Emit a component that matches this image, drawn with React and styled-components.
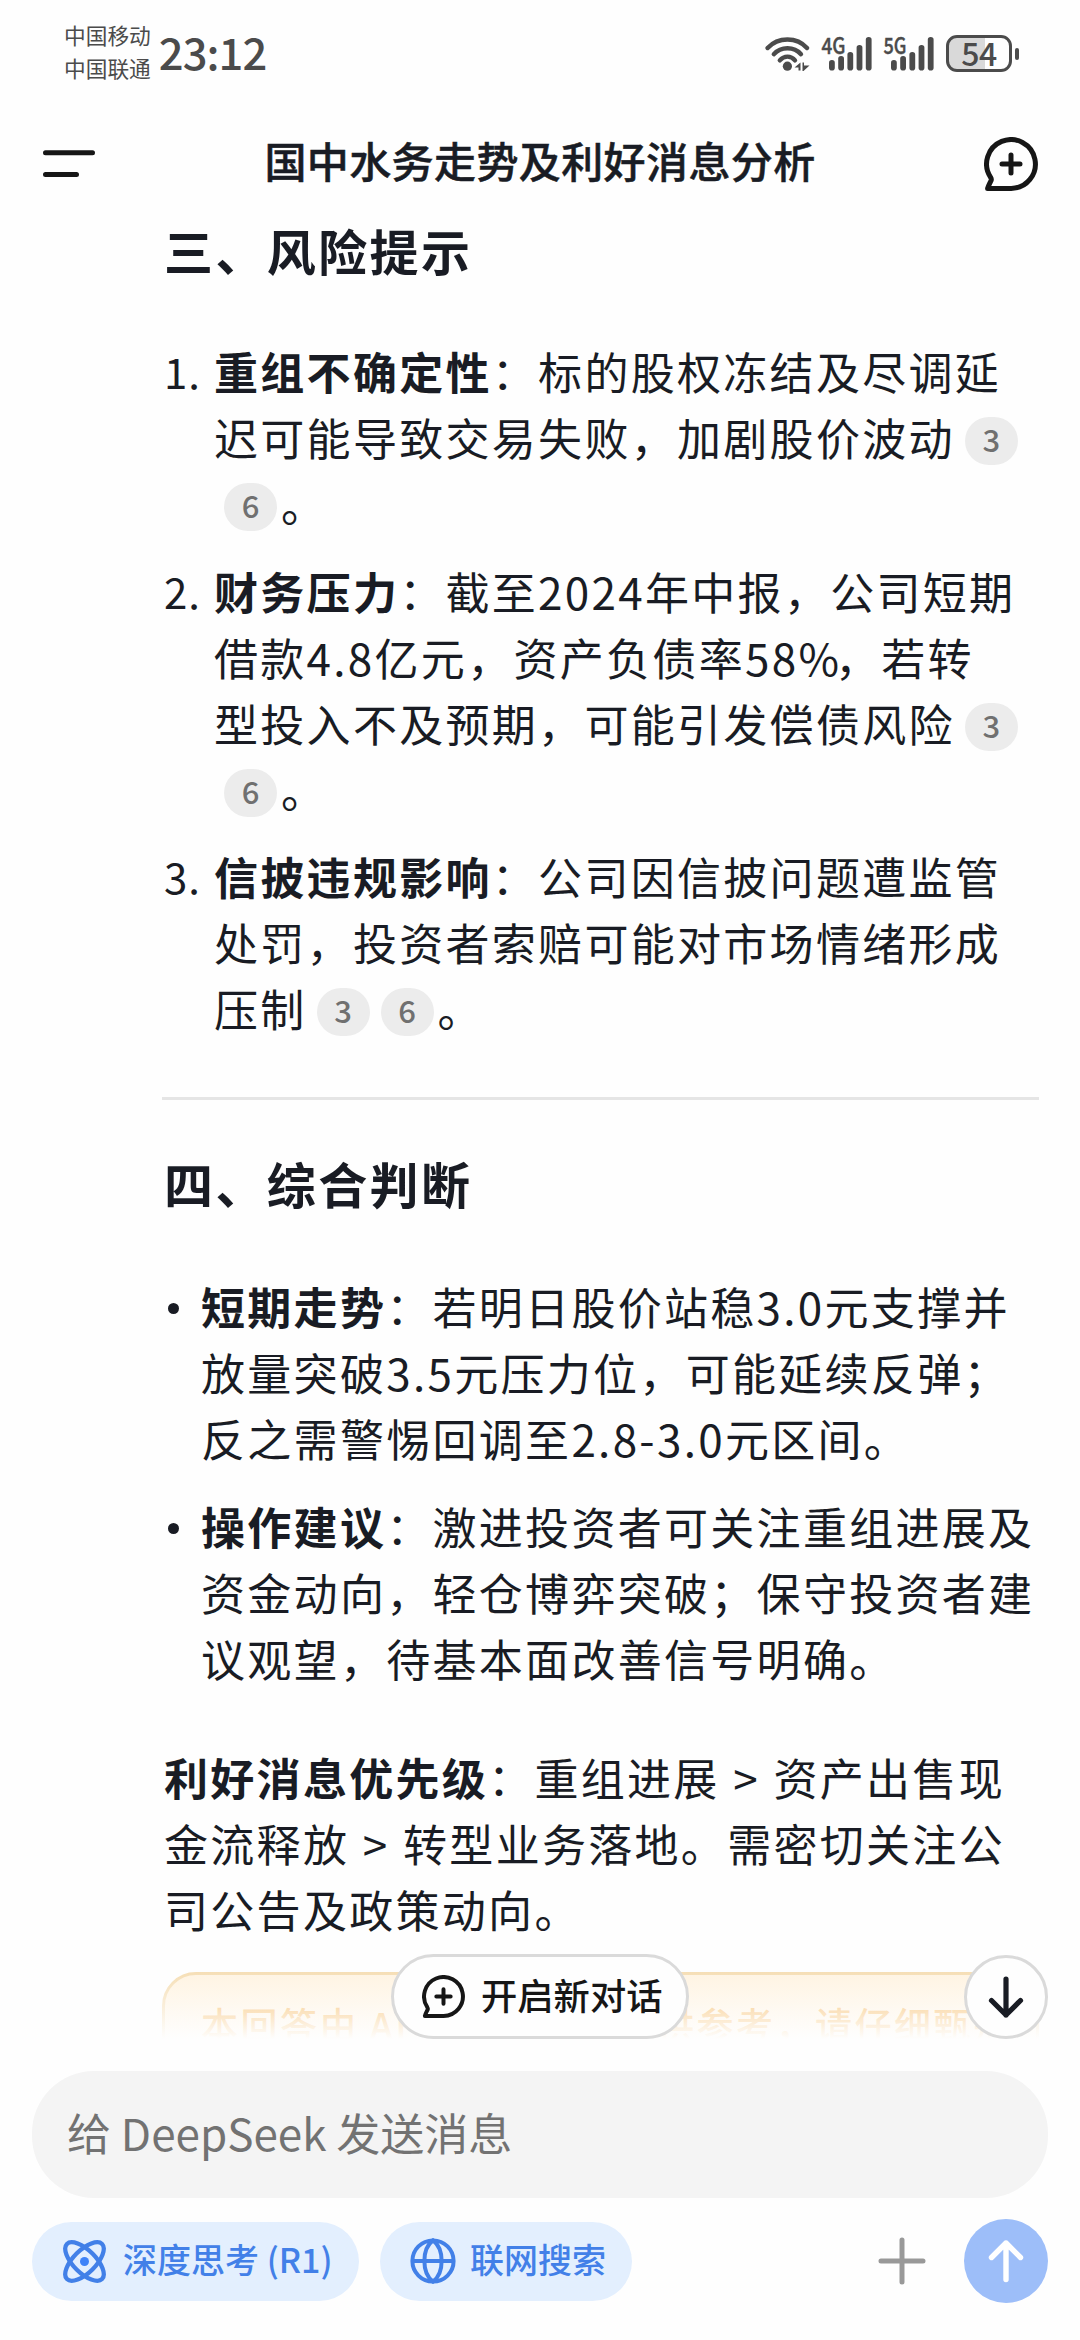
import React from 'react'
import styled, { createGlobalStyle } from 'styled-components'

const GlobalStyle = createGlobalStyle`
  * {
    box-sizing: border-box;
  }

  body {
    margin: 0;
    background-color: #fefefe;
    color: #191c24;
    font-family: 'Noto Sans CJK SC', sans-serif;
    text-spacing-trim: space-all;
    overflow: hidden;
  }
`

const Screen = styled.div`
  display: flex;
  flex-direction: column;
  width: 1080px;
  height: 2340px;
  background-color: #fefefe;
  white-space: nowrap;
`

const StatusBar = styled.div`
  display: flex;
  justify-content: space-between;
  height: 112px;
  padding: 0 61px 0 64px;
  color: #4b4b4b;
`

const StatusLeft = styled.div`
  display: flex;
  gap: 8px;
`

const Carriers = styled.div`
  padding-top: 18px;
  font-size: 21.7px;
  line-height: 33px;
`

const Clock = styled.div`
  padding-top: 19px;
  font-size: 43.5px;
  font-weight: 500;
  letter-spacing: -0.9px;
  line-height: 66px;
`

const StatusIcons = styled.div`
  display: flex;
  align-items: flex-start;
  padding-top: 35px;
`

const WifiIcon = styled.svg`
  margin-right: 11px;
`

const SignalIcon = styled.svg`
  margin-right: ${props => props.$gap}px;
  overflow: visible;
`

const Battery = styled.div`
  width: 66px;
  height: 37px;
  border: 3px solid #4b4b4b;
  border-radius: 11px;
  background: linear-gradient(to right, #d9d9d9 36px, #fefefe 36px);
  font-size: 32px;
  font-weight: 500;
  letter-spacing: -0.6px;
  line-height: 28px;
  text-align: center;
`

const BatteryTip = styled.div`
  width: 4px;
  height: 12px;
  margin: 13px 0 0 3px;
  border-radius: 2px;
  background-color: #4b4b4b;
`

const Header = styled.header`
  display: flex;
  align-items: center;
  justify-content: space-between;
  height: 100px;
  padding: 3px 42px 0;
`

const Title = styled.h1`
  margin: 0 0 8px;
  font-size: 42px;
  font-weight: 500;
  letter-spacing: 0.4px;
  line-height: 60px;
  -webkit-text-stroke: 0.5px #191c24;
`

const Thread = styled.main`
  position: relative;
  height: 1827px;
`

const Messages = styled.div`
  height: 1827px;
  padding: 6px 41px 0 162px;
  overflow: hidden;
`

const Heading = styled.h2`
  position: relative;
  margin: 0 0 ${props => props.$gap}px 2px;
  font-size: 49px;
  font-weight: 700;
  letter-spacing: 2.4px;
  line-height: 64px;
  padding-bottom: 2px;
`

const List = styled.div`
  display: flex;
  flex-direction: column;
  gap: 21.5px;
`

const Item = styled.div`
  display: flex;
`

const Marker = styled.div`
  flex: none;
  width: 50px;
  margin-left: 2px;
  font-size: 42px;
  line-height: 66px;
  letter-spacing: 1px;
`

const Bullet = styled.div`
  flex: none;
  width: 11px;
  height: 11px;
  margin: 30px 22px 0 6px;
  border-radius: 50%;
  background-color: #191c24;
`

const Line = styled.div`
  height: 66px;
  font-size: 44px;
  line-height: 66px;
  letter-spacing: 2.3px;
  word-spacing: 1.4px;
`

const Strong = styled.strong`
  font-weight: 700;
`

const Percent = styled.span`
  letter-spacing: -4px;
`

const Cite = styled.span`
  display: inline-block;
  width: 53px;
  height: 48px;
  margin: 0 4px 0 10px;
  border-radius: 24px;
  background-color: #ececec;
  color: #707070;
  font-size: 31px;
  font-weight: 500;
  letter-spacing: 0;
  line-height: 44px;
  text-align: center;
  vertical-align: 4px;

  & + & {
    margin-left: 7px;
  }
`

const Divider = styled.div`
  height: 3px;
  margin: 56px 0 51px;
  background-color: #e5e5e5;
`

const Paragraph = styled.div`
  margin: 53px 0 0 2px;
`

const Disclaimer = styled.div`
  height: 160px;
  margin-top: 30px;
  padding: 22px 36px;
  border: 3px solid #f5dcb0;
  border-radius: 34px;
  background-color: #fff3e0;
  color: #f6b556;
  font-size: 37px;
  font-weight: 500;
  letter-spacing: 2.5px;
  line-height: 54px;
`

const Fade = styled.div`
  position: absolute;
  right: 0;
  bottom: 0;
  left: 0;
  height: 72px;
  background: linear-gradient(to bottom, rgba(254, 254, 254, 0), #fefefe);
`

const NewChatButton = styled.button`
  position: absolute;
  bottom: 0;
  left: 391px;
  display: flex;
  align-items: center;
  gap: 16px;
  width: 298px;
  height: 85px;
  padding: 0 0 0 28px;
  border: 3px solid #dadada;
  border-radius: 43px;
  background-color: #fefefe;
  color: #161616;
  font-family: inherit;
  font-size: 36.3px;
  font-weight: 500;
  line-height: 50px;
`

const ButtonText = styled.span`
  margin-bottom: 5px;
`

const ScrollButton = styled.button`
  position: absolute;
  right: 32px;
  bottom: 0;
  display: flex;
  align-items: center;
  justify-content: center;
  width: 84px;
  height: 84px;
  padding: 0;
  border: 3px solid #dadada;
  border-radius: 50%;
  background-color: #fefefe;
`

const Composer = styled.footer`
  padding: 32px 32px 0;
`

const MessageBox = styled.div`
  height: 127px;
  padding: 28px 35px;
  border-radius: 62px;
  background-color: #f4f4f4;
  color: #727272;
  font-size: 44px;
  line-height: 66px;
`

const Tools = styled.div`
  display: flex;
  align-items: center;
  height: 84px;
  margin-top: 21px;
`

const Chip = styled.div`
  display: flex;
  align-items: center;
  width: ${props => props.$width}px;
  height: 79px;
  margin-right: 21px;
  padding-left: 30px;
  border-radius: 40px;
  background-color: #e3effe;
  color: #4280e8;
  font-size: 34px;
  font-weight: 500;
  line-height: 50px;
`

const ChipText = styled.span`
  margin: 0 0 4px ${props => props.$gap}px;
`

const AddIcon = styled.svg`
  margin-left: auto;
`

const SendButton = styled.button`
  display: flex;
  align-items: center;
  justify-content: center;
  width: 84px;
  height: 84px;
  margin-left: 38px;
  padding: 0;
  border: none;
  border-radius: 50%;
  background-color: #9dbef9;
`

function ChatPlus({ size, stroke = 5 }) {
  return (
    <svg width={size} height={size} viewBox="0 0 54 54" fill="none" stroke="#161616" strokeWidth={stroke} strokeLinejoin="round" strokeLinecap="round">
      <path d="M3.6 51.4 C4.4 48.6 6 46 7.2 43.2 C7.6 42.2 7.2 41.4 6.6 40.4 A24.4 24.4 0 1 1 27.2 51.4 Z" />
      <path d="M18 27 H36 M27 18 V36" />
    </svg>
  )
}

function Signal({ label, width, gap }) {
  const tops = [25, 21, 17, 10, 2]
  return (
    <SignalIcon $gap={gap} width="51" height="37" viewBox="0 0 51 37" fill="#4b4b4b">
      <text x="0.5" y="18.5" fontSize="22.5" fontWeight="500" stroke="#4b4b4b" strokeWidth="0.4" textLength={width} lengthAdjust="spacingAndGlyphs">{label}</text>
      {tops.map((top, index) => (
        <rect key={index} x={8 + index * 9.2} y={top} width="5.8" height={35.5 - top} rx="2.8" />
      ))}
    </SignalIcon>
  )
}

function App() {
  return (
    <>
      <GlobalStyle />
      <Screen>
        <StatusBar>
          <StatusLeft>
            <Carriers>
              <div>中国移动</div>
              <div>中国联通</div>
            </Carriers>
            <Clock>23:12</Clock>
          </StatusLeft>
          <StatusIcons>
            <WifiIcon width="45" height="37" viewBox="0 0 45 37" fill="none" stroke="#4b4b4b" strokeWidth="4.4" strokeLinecap="round">
              <path d="M2.6 13 C13 1.6 32 1.6 42 13" />
              <path d="M8.8 19.2 C16 11.3 29 11.3 36 19.2" />
              <path d="M14.8 25.4 C19 20.4 26 20.4 30 25.4" />
              <circle cx="22.4" cy="31.2" r="4.6" fill="#4b4b4b" stroke="none" />
              <path d="M29.5 32.5 L35.5 27.5 V35.5 H33.5 V32.5 Z M37.5 27.5 H39 V30.5 H44.5 L38.5 36 H37.5 Z" fill="#4b4b4b" stroke="none" />
            </WifiIcon>
            <Signal label="4G" width={24} gap={11} />
            <Signal label="5G" width={23} gap={12} />
            <Battery>54</Battery>
            <BatteryTip />
          </StatusIcons>
        </StatusBar>

        <Header>
          <svg width="54" height="28" viewBox="0 0 54 28" stroke="#161616" strokeWidth="5" strokeLinecap="round">
            <path d="M3.5 2.8 H50.5 M3.5 24.4 H34.5" />
          </svg>
          <Title>国中水务走势及利好消息分析</Title>
          <ChatPlus size={54} />
        </Header>

        <Thread>
          <Messages>
            <Heading $gap={54}>三、风险提示</Heading>
            <List>
              <Item>
                <Marker>1.</Marker>
                <div>
                  <Line><Strong>重组不确定性</Strong>：标的股权冻结及尽调延</Line>
                  <Line>迟可能导致交易失败，加剧股价波动<Cite>3</Cite></Line>
                  <Line><Cite>6</Cite>。</Line>
                </div>
              </Item>
              <Item>
                <Marker>2.</Marker>
                <div>
                  <Line><Strong>财务压力</Strong>：截至2024年中报，公司短期</Line>
                  <Line>借款4.8亿元，资产负债率58<Percent>%</Percent>，若转</Line>
                  <Line>型投入不及预期，可能引发偿债风险<Cite>3</Cite></Line>
                  <Line><Cite>6</Cite>。</Line>
                </div>
              </Item>
              <Item>
                <Marker>3.</Marker>
                <div>
                  <Line><Strong>信披违规影响</Strong>：公司因信披问题遭监管</Line>
                  <Line>处罚，投资者索赔可能对市场情绪形成</Line>
                  <Line>压制<Cite>3</Cite><Cite>6</Cite>。</Line>
                </div>
              </Item>
            </List>

            <Divider />

            <Heading $gap={56}>四、综合判断</Heading>
            <List>
              <Item>
                <Bullet />
                <div>
                  <Line><Strong>短期走势</Strong>：若明日股价站稳3.0元支撑并</Line>
                  <Line>放量突破3.5元压力位，可能延续反弹；</Line>
                  <Line>反之需警惕回调至2.8-3.0元区间。</Line>
                </div>
              </Item>
              <Item>
                <Bullet />
                <div>
                  <Line><Strong>操作建议</Strong>：激进投资者可关注重组进展及</Line>
                  <Line>资金动向，轻仓博弈突破；保守投资者建</Line>
                  <Line>议观望，待基本面改善信号明确。</Line>
                </div>
              </Item>
            </List>

            <Paragraph>
              <Line><Strong>利好消息优先级</Strong>：重组进展 &gt; 资产出售现</Line>
              <Line>金流释放 &gt; 转型业务落地。需密切关注公</Line>
              <Line>司公告及政策动向。</Line>
            </Paragraph>

            <Disclaimer>本回答由 AI 生成，内容仅供参考，请仔细甄别</Disclaimer>
          </Messages>

          <Fade />
          <NewChatButton>
            <ChatPlus size={43} />
            <ButtonText>开启新对话</ButtonText>
          </NewChatButton>
          <ScrollButton>
            <svg width="36" height="44" viewBox="0 0 36 44" fill="none" stroke="#191c24" strokeWidth="5.2" strokeLinecap="round" strokeLinejoin="round">
              <path d="M18 4 V40 M3.5 25.5 L18 40 L32.5 25.5" />
            </svg>
          </ScrollButton>
        </Thread>

        <Composer>
          <MessageBox>给 DeepSeek 发送消息</MessageBox>
          <Tools>
            <Chip $width={327}>
              <svg width="45" height="45" viewBox="1.5 1.5 21 21" fill="none" stroke="#4280e8" strokeWidth="2" strokeLinejoin="round">
                <path d="M20.2 20.2c2.04-2.03.02-7.36-4.5-11.9-4.54-4.52-9.87-6.54-11.9-4.5-2.04 2.03-.02 7.36 4.5 11.9 4.54 4.52 9.87 6.54 11.9 4.5Z" />
                <path d="M15.7 15.7c4.52-4.54 6.54-9.87 4.5-11.9-2.03-2.04-7.36-.02-11.9 4.5-4.52 4.54-6.54 9.87-4.5 11.9 2.03 2.04 7.36.02 11.9-4.5Z" />
                <circle cx="12" cy="12" r="2.1" fill="#3f83f8" stroke="none" />
              </svg>
              <ChipText $gap={16}>深度思考 (R1)</ChipText>
            </Chip>
            <Chip $width={252}>
              <svg width="46" height="46" viewBox="0 0 46 46" fill="none" stroke="#4280e8" strokeWidth="4">
                <circle cx="23" cy="23" r="20.6" />
                <path d="M2.4 23 H43.6" />
                <path d="M23 2.4 C11.5 11 11.5 35 23 43.6 C34.5 35 34.5 11 23 2.4 Z" />
              </svg>
              <ChipText $gap={14}>联网搜索</ChipText>
            </Chip>
            <AddIcon width="48" height="48" viewBox="0 0 48 48" stroke="#999999" strokeWidth="5" strokeLinecap="round">
              <path d="M3 24 H45 M24 3 V45" />
            </AddIcon>
            <SendButton>
              <svg width="36" height="44" viewBox="0 0 36 44" fill="none" stroke="#ffffff" strokeWidth="5.4" strokeLinecap="round" strokeLinejoin="round">
                <path d="M18 40.5 V4 M3.5 18.5 L18 4 L32.5 18.5" />
              </svg>
            </SendButton>
          </Tools>
        </Composer>
      </Screen>
    </>
  )
}

export default App
